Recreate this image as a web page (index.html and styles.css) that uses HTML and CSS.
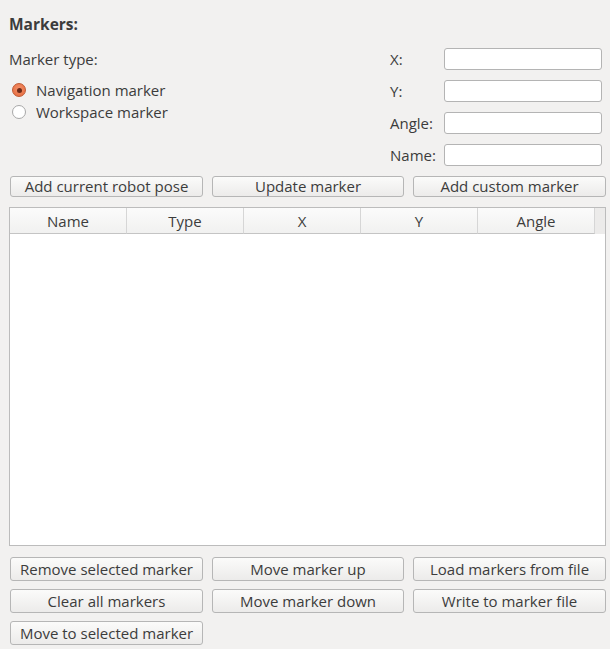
FILE: index.html
```html
<!DOCTYPE html>
<html>
<head>
<meta charset="utf-8">
<link rel="stylesheet" href="styles.css">
</head>
<body>
<div class="panel">
  <div class="title">Markers:</div>
  <div class="top">
    <div class="type">
      <div class="type-label">Marker type:</div>
      <label class="radio"><span class="dot checked"></span>Navigation marker</label>
      <label class="radio"><span class="dot"></span>Workspace marker</label>
    </div>
    <div class="form">
      <span class="flabel">X:</span><span class="input"></span>
      <span class="flabel">Y:</span><span class="input"></span>
      <span class="flabel">Angle:</span><span class="input"></span>
      <span class="flabel">Name:</span><span class="input"></span>
    </div>
  </div>
  <div class="btns">
    <button class="btn">Add current robot pose</button>
    <button class="btn">Update marker</button>
    <button class="btn">Add custom marker</button>
  </div>
  <div class="table">
    <div class="thead">
      <div class="th">Name</div>
      <div class="th">Type</div>
      <div class="th">X</div>
      <div class="th">Y</div>
      <div class="th">Angle</div>
      <div class="th-fill"></div>
    </div>
    <div class="tbody"></div>
  </div>
  <div class="btns bottom">
    <button class="btn">Remove selected marker</button>
    <button class="btn">Move marker up</button>
    <button class="btn">Load markers from file</button>
    <button class="btn">Clear all markers</button>
    <button class="btn">Move marker down</button>
    <button class="btn">Write to marker file</button>
    <button class="btn">Move to selected marker</button>
  </div>
</div>
</body>
</html>
```
FILE: styles.css
```css
html, body {
  margin: 0;
  padding: 0;
  background: #f2f1f0;
}
body {
  width: 610px;
  height: 649px;
  overflow: hidden;
  font-family: "Open Sans", "DejaVu Sans", sans-serif;
  font-size: 15px;
  color: #3c3c3c;
}
.panel {
  padding: 14px 4px 0 9px;
}
.title {
  font-weight: bold;
  font-size: 15.5px;
  line-height: 20px;
  height: 20px;
  margin-bottom: 14px;
}
.top {
  display: flex;
  justify-content: space-between;
}
.type {
  display: flex;
  flex-direction: column;
}
.type-label {
  line-height: 22px;
  height: 22px;
  margin-bottom: 9px;
}
.radio {
  display: flex;
  align-items: center;
  height: 22px;
  line-height: 22px;
  gap: 10px;
  padding-left: 3px;
}
.dot {
  width: 12px;
  height: 12px;
  border-radius: 50%;
  border: 1px solid #a8a8a8;
  background: #fff;
  box-sizing: content-box;
  position: relative;
}
.dot.checked {
  border-color: #c05a34;
  background: radial-gradient(circle at 50% 40%, #f4916a, #e4683a);
}
.dot.checked::after {
  content: "";
  position: absolute;
  left: 3.5px;
  top: 3.5px;
  width: 5px;
  height: 5px;
  border-radius: 50%;
  background: #6a2a18;
}
.form {
  display: grid;
  grid-template-columns: 54px 158px;
  row-gap: 10px;
  margin-right: 4px;
  padding-left: 2px;
}
.flabel {
  line-height: 22px;
  height: 22px;
}
.input {
  height: 22px;
  box-sizing: border-box;
  border: 1px solid #b4b4b4;
  border-radius: 3px;
  background: #fff;
}
.btns {
  display: grid;
  grid-template-columns: 193px 192px 193px;
  column-gap: 9px;
  padding-left: 1px;
  margin-top: 10px;
}
.btn {
  font-family: inherit;
  font-size: 15px;
  color: #3c3c3c;
  height: 21px;
  padding: 0;
  line-height: 19px;
  border: 1px solid #b6b6b6;
  border-radius: 3px;
  background: linear-gradient(#fbfbfa, #ecebea);
  white-space: nowrap;
}
.table {
  margin-top: 10px;
  width: 597px;
  height: 339px;
  box-sizing: border-box;
  border: 1px solid #bcbcbc;
  background: #fff;
  display: flex;
  flex-direction: column;
}
.thead {
  display: flex;
  height: 26px;
  box-sizing: border-box;
  background: #ecebea;
}
.th {
  width: 117px;
  box-sizing: border-box;
  text-align: center;
  line-height: 27px;
  border-right: 1px solid #d6d6d6;
  border-bottom: 1px solid #c4c4c4;
  background: linear-gradient(#fbfbfb, #f1f1f0);
}
.th:last-of-type {
  border-right: 1px solid #c4c4c4;
}
.th-fill {
  flex: 1;
  background: #ecebea;
}
.tbody {
  flex: 1;
  background: #fff;
}
.bottom {
  margin-top: 11px;
  row-gap: 8px;
}
.bottom .btn {
  height: 24px;
  line-height: 22px;
}
```
